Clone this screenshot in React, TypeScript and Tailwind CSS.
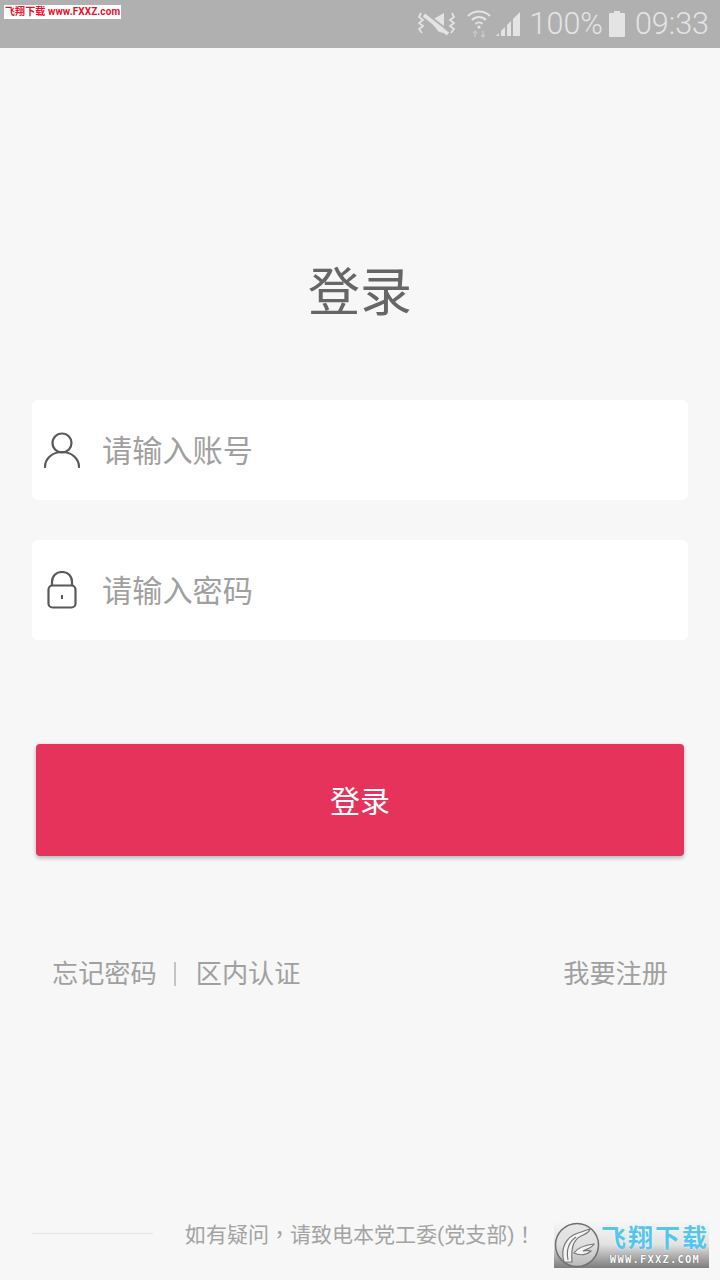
import React from 'react';

const cjk = "font-['Roboto','Noto_Sans_CJK_SC',sans-serif]";

function MuteIcon() {
  return (
    <svg width="38" height="28" viewBox="0 0 38 28" fill="none" stroke="#e4e4e4">
      <path d="M3 3L1 7l4 3-4 3 4 3-4 3 3 4" strokeWidth="1.7" />
      <path d="M34 3l2 4-4 3 4 3-4 3 4 3-3 4" strokeWidth="1.7" />
      <path d="M12 11l14-8v20l-5-1z" fill="#e4e4e4" stroke="none" />
      <path d="M6 5l24 19" strokeWidth="4" stroke="#e4e4e4" />
      <path d="M8 3l24 19" strokeWidth="1.6" stroke="#b0b0b0" />
    </svg>
  );
}

function WifiIcon() {
  return (
    <svg width="24" height="28" viewBox="0 0 24 28" fill="none" stroke="#e4e4e4" strokeWidth="2">
      <path d="M1 6c6-6 16-6 22 0" />
      <path d="M5 10c4-4 10-4 14 0" />
      <path d="M8.5 14c2-2 5-2 7 0" />
      <circle cx="12" cy="17" r="1.6" fill="#e4e4e4" stroke="none" />
      <path d="M8 27v-6M6 23l2-2 2 2M16 21v6M14 25l2 2 2-2" stroke="#c8c8c8" strokeWidth="1.4" />
    </svg>
  );
}

function SignalIcon() {
  return (
    <svg width="25" height="26" viewBox="0 0 25 26" fill="#e4e4e4">
      <path d="M0 25l3-3v3z" />
      <path d="M5 25v-5l4-4v9z" />
      <path d="M11 25V14l4-4v15z" />
      <path d="M17 25V8l7-7v24z" />
    </svg>
  );
}

function BatteryIcon() {
  return (
    <svg width="16" height="26" viewBox="0 0 16 26" fill="#e4e4e4">
      <path d="M5 0h6v2h4a1 1 0 0 1 1 1v22a1 1 0 0 1-1 1H1a1 1 0 0 1-1-1V3a1 1 0 0 1 1-1h4z" />
    </svg>
  );
}

function UserIcon() {
  return (
    <svg width="36" height="36" viewBox="0 0 36 36" fill="none" stroke="#595959" strokeWidth="2.2" strokeLinecap="round">
      <circle cx="18" cy="11" r="9.5" />
      <path d="M1 35c0-8 7-15 17-15s17 7 17 15" />
    </svg>
  );
}

function LockIcon() {
  return (
    <svg width="30" height="38" viewBox="0 0 30 38" fill="none" stroke="#595959" strokeWidth="2.2">
      <path d="M5 15V11C5 5 9 1 15 1s10 4 10 10v4" />
      <rect x="1.5" y="14.5" width="27" height="22" rx="4" />
      <path d="M15 24v4" strokeWidth="2" />
    </svg>
  );
}

function FieldRow({ icon, placeholder }: { icon: React.ReactNode; placeholder: string }) {
  return (
    <div className="flex h-[100px] items-center rounded-md bg-white">
      <div className="flex w-[60px] justify-center">{icon}</div>
      <span className="ml-[10px] pt-[4px] text-[30.2px] text-[#a0a0a0]">{placeholder}</span>
    </div>
  );
}

export default function App() {
  return (
    <div className={`relative flex h-[1280px] w-[720px] flex-col overflow-hidden bg-[#f7f7f7] ${cjk}`}>
      {/* status bar */}
      <div className="flex h-12 items-center justify-end bg-[#b0b0b0] pr-[11px] text-[30.5px] font-light text-[#e4e4e4]">
        <MuteIcon />
        <div className="ml-[11px]"><WifiIcon /></div>
        <div className="ml-[5px]"><SignalIcon /></div>
        <span className="ml-[9px] leading-none">100%</span>
        <div className="ml-[6px]"><BatteryIcon /></div>
        <span className="ml-[10px] leading-none">09:33</span>
      </div>

      {/* watermark */}
      <div className="absolute left-1 top-[5px] flex h-[14px] w-[117px] items-center whitespace-nowrap bg-white pl-[1px] text-[10px] font-bold leading-none tracking-[0.1px] text-[#e8102c]">
        飞翔下载 www.FXXZ.com
      </div>

      <h1 className="mt-[214px] text-center text-[52px] leading-[64px] text-[#666666]">登录</h1>

      <div className="mt-[74px] flex flex-col gap-10 px-8">
        <FieldRow icon={<UserIcon />} placeholder="请输入账号" />
        <FieldRow icon={<LockIcon />} placeholder="请输入密码" />
      </div>

      <button className="mx-9 mt-[104px] h-[112px] rounded-[4px] bg-[#e5335b] pt-[2px] text-[30px] text-white shadow-[0_2px_4px_rgba(0,0,0,0.28)]">
        登录
      </button>

      <div className="mt-[100px] flex items-center justify-between px-[52px] text-[26.2px] leading-[36px] text-[#a0a0a0]">
        <div className="flex items-center">
          <span>忘记密码</span>
          <div className="ml-[17px] mr-[20px] h-6 w-[2px] bg-[#c4c4c4]" />
          <span>区内认证</span>
        </div>
        <span>我要注册</span>
      </div>

      {/* footer */}
      <div className="mt-auto mb-[30px] flex items-center pl-8 font-['Roboto','Noto_Sans_CJK_TC',sans-serif] text-[21px] leading-[30px] text-[#a3a3a3]">
        <div className="mb-1 h-[1px] w-[121px] bg-[#e4e4e4]" />
        <span className="ml-[32px] whitespace-nowrap">如有疑问，请致电本党工委(党支部)！</span>
      </div>

      {/* bottom watermark */}
      <div className="absolute left-[554px] top-[1221px] flex h-[47px] w-[155px] items-center bg-gradient-to-b from-[#f7f7f7] via-[#e2e2e2] to-[#7d7d7d]">
        <svg width="46" height="46" viewBox="0 0 46 46" fill="none" className="shrink-0">
          <circle cx="23" cy="23" r="21.5" fill="#dedede" fillOpacity="0.6" stroke="#6f6f6f" strokeWidth="1.5" />
          <path d="M10 40C6 26 12 15 24 11c4-1 8-3 12-4-1 4-5 5-9 7-8 4-10 12-9 26z" fill="#f4f4f4" stroke="#777" strokeWidth="1.2" />
          <path d="M14 38C12 28 15 20 22 15" stroke="#777" strokeWidth="1.2" />
          <path d="M20 31c4-6 11-8 20-9-2 4-7 5-11 7 3 0 6-1 8 0-4 4-11 5-17 2z" fill="#f4f4f4" stroke="#777" strokeWidth="1.2" />
        </svg>
        <div className="flex flex-col items-center pl-[1px]">
          <span className="text-[25px] font-bold leading-[29px] tracking-[2px] text-[#56c5ec] [text-shadow:0_0_2px_#ffffff]">飞翔下载</span>
          <span className="font-['DejaVu_Sans_Mono',monospace] text-[10.5px] font-bold leading-[13px] tracking-[1.2px] text-white [text-shadow:0_0_1px_#444444]">WWW.FXXZ.COM</span>
        </div>
      </div>
    </div>
  );
}
